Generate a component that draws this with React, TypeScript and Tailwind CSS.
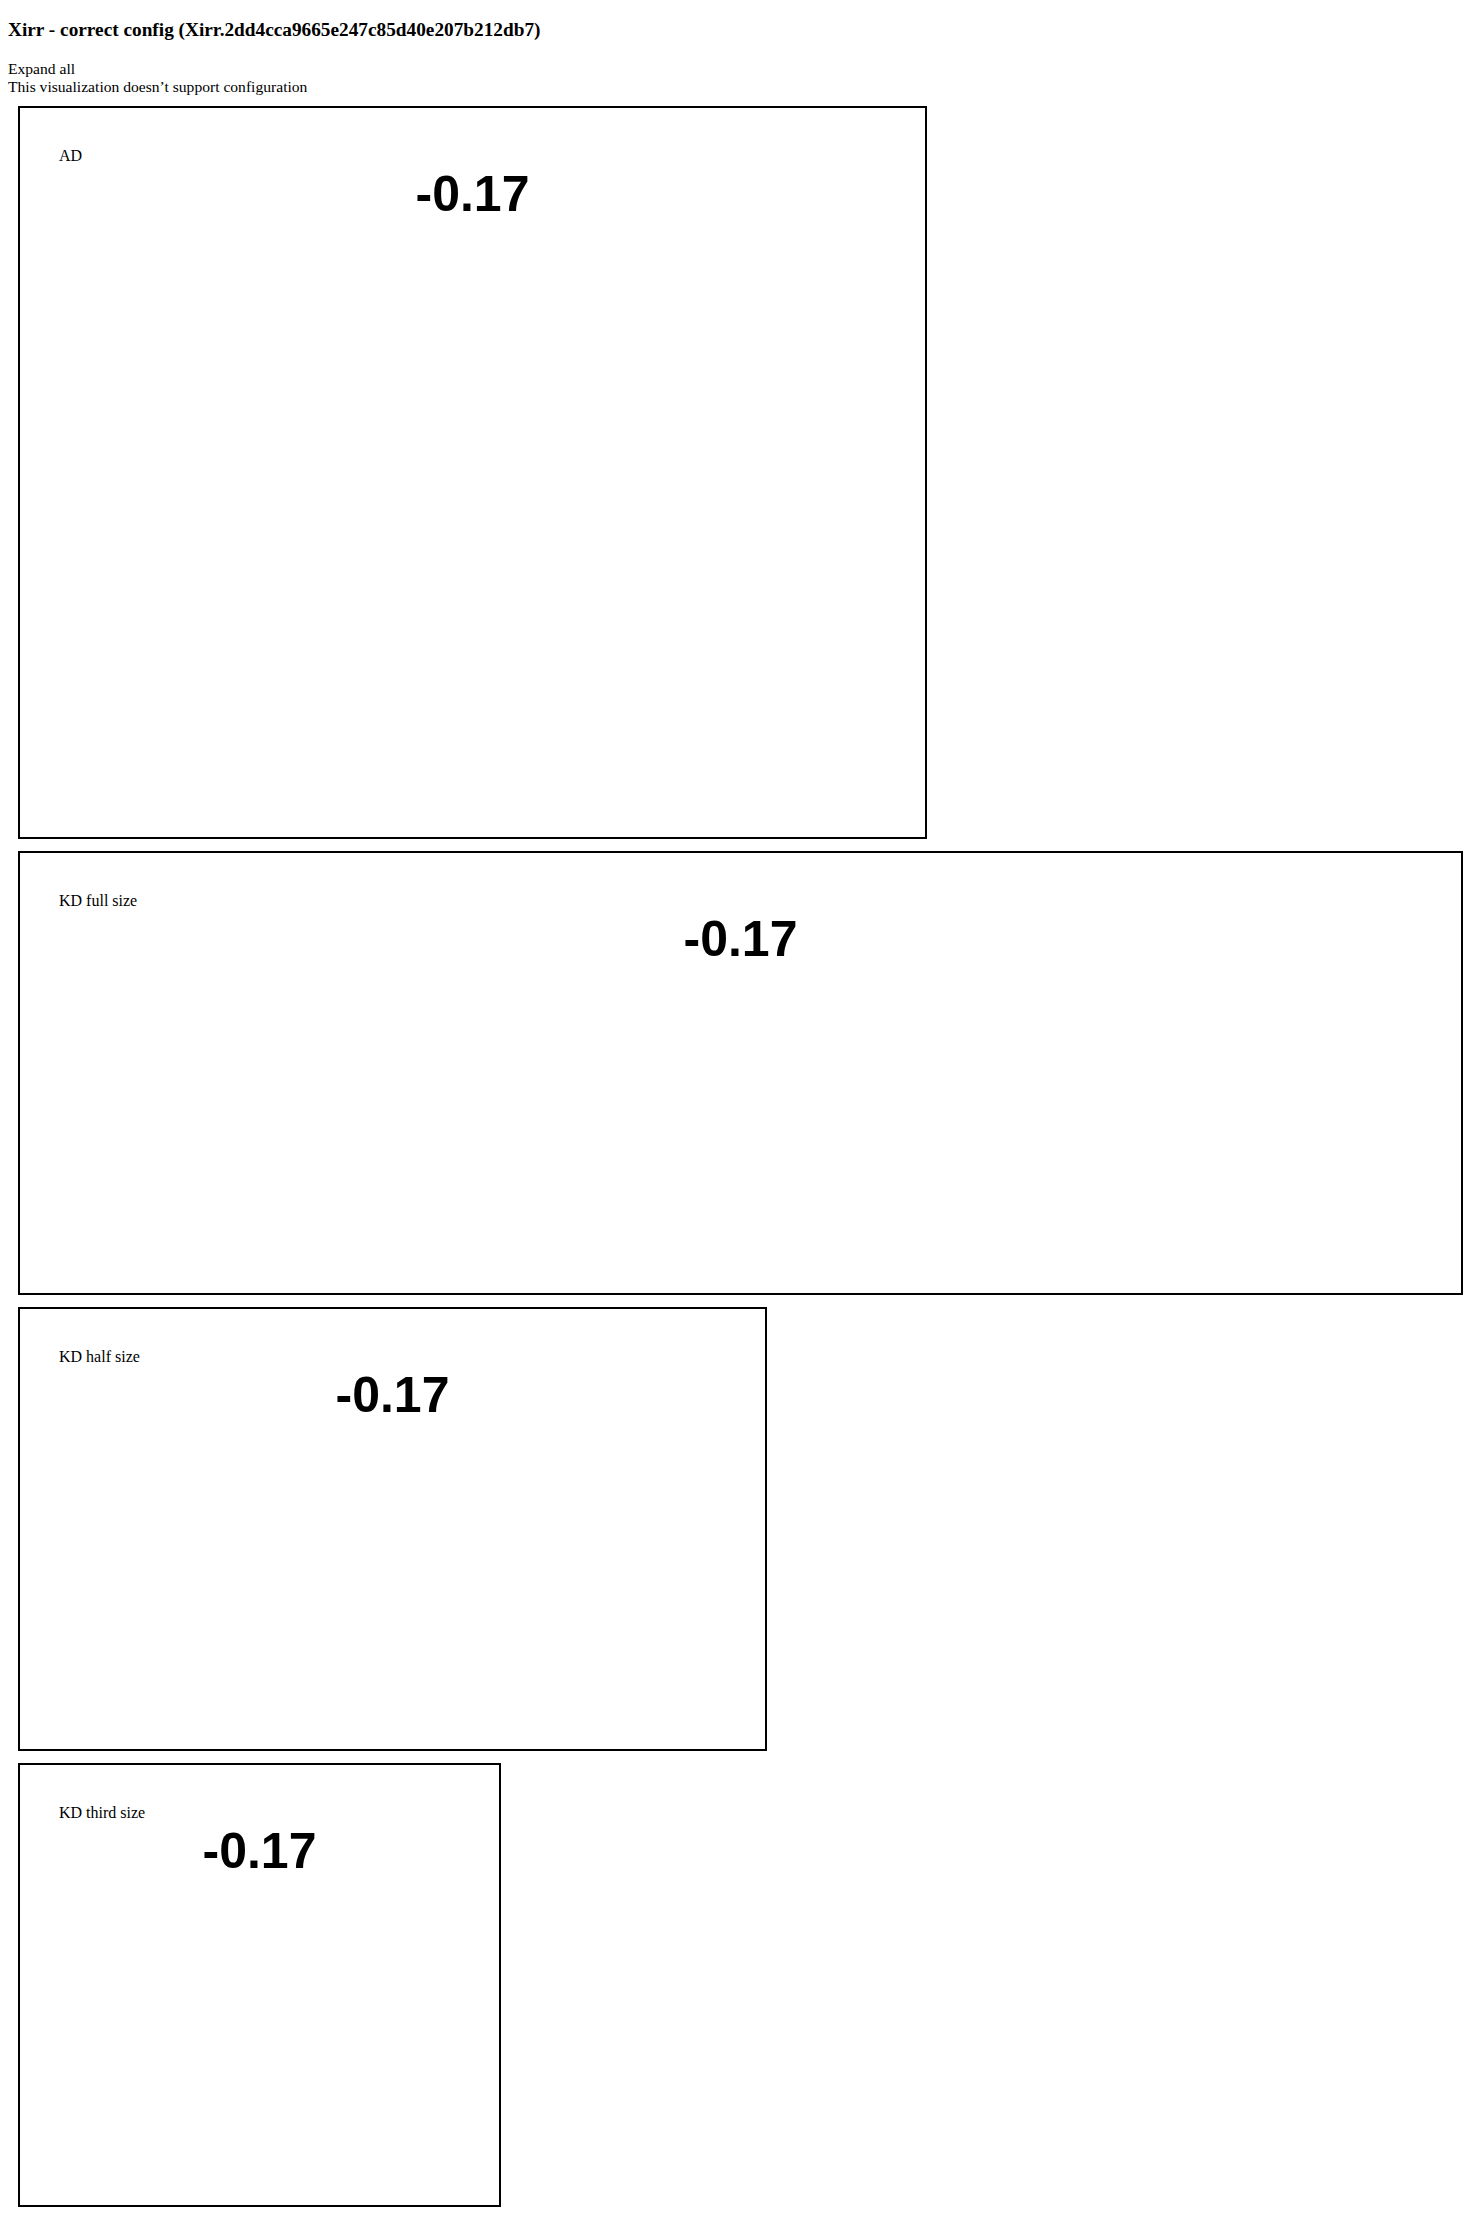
const serif = { fontFamily: '"Liberation Serif", "Times New Roman", serif' }

const panels = [
  { label: 'AD', width: 'w-[909px]', height: 'h-[733px]' },
  { label: 'KD full size', width: 'w-[1445px]', height: 'h-[444px]' },
  { label: 'KD half size', width: 'w-[749px]', height: 'h-[444px]' },
  { label: 'KD third size', width: 'w-[483px]', height: 'h-[444px]' },
]

function BigNumberPanel({ label, width, height }: { label: string; width: string; height: string }) {
  return (
    <div className={`${width} ${height} border-2 border-black bg-white pt-[39px] px-[39px]`}>
      <div className="text-[16px] leading-[18.4px] text-black font-['Liberation_Serif',serif]">{label}</div>
      <div className="-mt-px text-center text-[50px] leading-[normal] font-bold text-black font-['Liberation_Sans',Arial,sans-serif]">
        -0.17
      </div>
    </div>
  )
}

export default function App() {
  return (
    <div className="min-h-[2217px] bg-white px-2 pt-px text-black" style={serif}>
      <h3 className="mt-[17.72px] mb-[18.72px] text-[19.3px] font-bold leading-[22.2px]">
        Xirr - correct config (Xirr.2dd4cca9665e247c85d40e207b212db7)
      </h3>
      <div className="text-[15.6px] leading-[18.4px]">
        <div>Expand all</div>
        <div>This visualization doesn’t support configuration</div>
      </div>
      <div className="ml-[10px] mt-[10px] flex flex-col gap-[12px]">
        {panels.map(p => (
          <BigNumberPanel key={p.label} {...p} />
        ))}
      </div>
    </div>
  )
}
